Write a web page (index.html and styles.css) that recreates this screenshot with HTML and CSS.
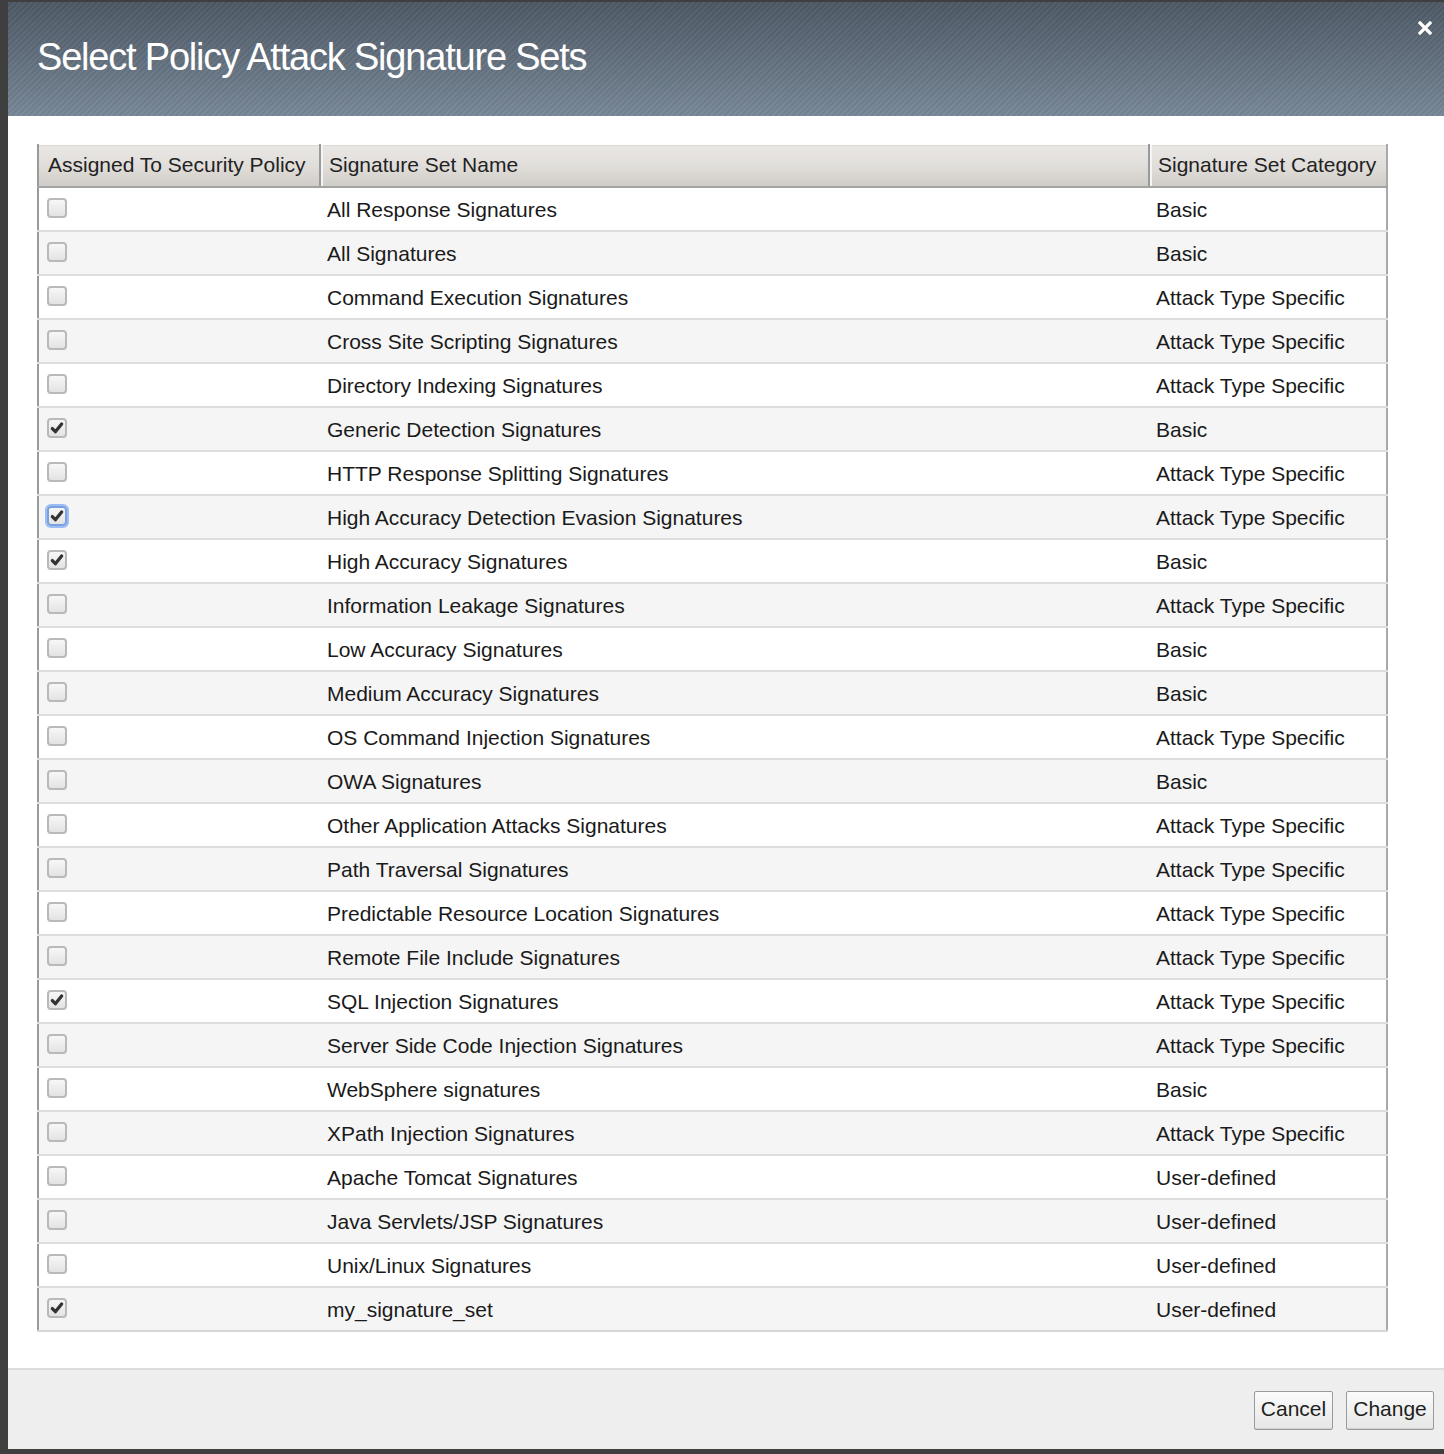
FILE: index.html
```html
<!DOCTYPE html>
<html>
<head>
<meta charset="utf-8">
<link rel="stylesheet" href="styles.css">
</head>
<body>
<div class="dialog">
  <div class="titlebar">
    <h1 class="title">Select Policy Attack Signature Sets</h1>
    <span class="close">
      <svg width="14" height="14" viewBox="0 0 14 14"><path d="M2 2 L12 12 M12 2 L2 12" stroke="#fff" stroke-width="3.2" stroke-linecap="square"/></svg>
    </span>
  </div>
  <div class="content">
    <table class="grid">
      <colgroup>
        <col class="col1">
        <col class="col2">
        <col class="col3">
      </colgroup>
      <thead>
        <tr>
          <th class="c1">Assigned To Security Policy</th>
          <th class="c2">Signature Set Name</th>
          <th class="c3">Signature Set Category</th>
        </tr>
      </thead>
      <tbody>
        <tr><td class="c1"><span class="cb"></span></td><td class="c2">All Response Signatures</td><td class="c3">Basic</td></tr>
        <tr><td class="c1"><span class="cb"></span></td><td class="c2">All Signatures</td><td class="c3">Basic</td></tr>
        <tr><td class="c1"><span class="cb"></span></td><td class="c2">Command Execution Signatures</td><td class="c3">Attack Type Specific</td></tr>
        <tr><td class="c1"><span class="cb"></span></td><td class="c2">Cross Site Scripting Signatures</td><td class="c3">Attack Type Specific</td></tr>
        <tr><td class="c1"><span class="cb"></span></td><td class="c2">Directory Indexing Signatures</td><td class="c3">Attack Type Specific</td></tr>
        <tr><td class="c1"><span class="cb on"><svg viewBox="0 0 12 12"><path d="M2 6.5 L4.6 9.2 L10 2.6" /></svg></span></td><td class="c2">Generic Detection Signatures</td><td class="c3">Basic</td></tr>
        <tr><td class="c1"><span class="cb"></span></td><td class="c2">HTTP Response Splitting Signatures</td><td class="c3">Attack Type Specific</td></tr>
        <tr><td class="c1"><span class="cb on focus"><svg viewBox="0 0 12 12"><path d="M2 6.5 L4.6 9.2 L10 2.6" /></svg></span></td><td class="c2">High Accuracy Detection Evasion Signatures</td><td class="c3">Attack Type Specific</td></tr>
        <tr><td class="c1"><span class="cb on"><svg viewBox="0 0 12 12"><path d="M2 6.5 L4.6 9.2 L10 2.6" /></svg></span></td><td class="c2">High Accuracy Signatures</td><td class="c3">Basic</td></tr>
        <tr><td class="c1"><span class="cb"></span></td><td class="c2">Information Leakage Signatures</td><td class="c3">Attack Type Specific</td></tr>
        <tr><td class="c1"><span class="cb"></span></td><td class="c2">Low Accuracy Signatures</td><td class="c3">Basic</td></tr>
        <tr><td class="c1"><span class="cb"></span></td><td class="c2">Medium Accuracy Signatures</td><td class="c3">Basic</td></tr>
        <tr><td class="c1"><span class="cb"></span></td><td class="c2">OS Command Injection Signatures</td><td class="c3">Attack Type Specific</td></tr>
        <tr><td class="c1"><span class="cb"></span></td><td class="c2">OWA Signatures</td><td class="c3">Basic</td></tr>
        <tr><td class="c1"><span class="cb"></span></td><td class="c2">Other Application Attacks Signatures</td><td class="c3">Attack Type Specific</td></tr>
        <tr><td class="c1"><span class="cb"></span></td><td class="c2">Path Traversal Signatures</td><td class="c3">Attack Type Specific</td></tr>
        <tr><td class="c1"><span class="cb"></span></td><td class="c2">Predictable Resource Location Signatures</td><td class="c3">Attack Type Specific</td></tr>
        <tr><td class="c1"><span class="cb"></span></td><td class="c2">Remote File Include Signatures</td><td class="c3">Attack Type Specific</td></tr>
        <tr><td class="c1"><span class="cb on"><svg viewBox="0 0 12 12"><path d="M2 6.5 L4.6 9.2 L10 2.6" /></svg></span></td><td class="c2">SQL Injection Signatures</td><td class="c3">Attack Type Specific</td></tr>
        <tr><td class="c1"><span class="cb"></span></td><td class="c2">Server Side Code Injection Signatures</td><td class="c3">Attack Type Specific</td></tr>
        <tr><td class="c1"><span class="cb"></span></td><td class="c2">WebSphere signatures</td><td class="c3">Basic</td></tr>
        <tr><td class="c1"><span class="cb"></span></td><td class="c2">XPath Injection Signatures</td><td class="c3">Attack Type Specific</td></tr>
        <tr><td class="c1"><span class="cb"></span></td><td class="c2">Apache Tomcat Signatures</td><td class="c3">User-defined</td></tr>
        <tr><td class="c1"><span class="cb"></span></td><td class="c2">Java Servlets/JSP Signatures</td><td class="c3">User-defined</td></tr>
        <tr><td class="c1"><span class="cb"></span></td><td class="c2">Unix/Linux Signatures</td><td class="c3">User-defined</td></tr>
        <tr><td class="c1"><span class="cb on"><svg viewBox="0 0 12 12"><path d="M2 6.5 L4.6 9.2 L10 2.6" /></svg></span></td><td class="c2">my_signature_set</td><td class="c3">User-defined</td></tr>
      </tbody>
    </table>
  </div>
  <div class="footer">
    <button class="btn btn-cancel">Cancel</button>
    <button class="btn btn-change">Change</button>
  </div>
</div>
</body>
</html>
```
FILE: styles.css
```css
html, body {
  margin: 0;
  padding: 0;
}
body {
  background: #3f3f3f;
  width: 1444px;
  height: 1454px;
  overflow: hidden;
  font-family: "Liberation Sans", Arial, sans-serif;
}
.dialog {
  margin: 2px 0 0 8px;
  width: 1436px;
  height: 1447px;
  background: #fff;
  display: flex;
  flex-direction: column;
}
.titlebar {
  height: 114px;
  flex: none;
  display: flex;
  align-items: center;
  justify-content: space-between;
  padding: 0 12px 0 29px;
  background:
    repeating-linear-gradient(135deg, rgba(255,255,255,0.035) 0 2px, rgba(0,0,0,0.035) 2px 4px),
    linear-gradient(to bottom, #4d5865 0%, #626f7d 50%, #788898 100%);
  box-sizing: border-box;
}
.title {
  margin: 0;
  margin-top: -3px;
  font-weight: normal;
  font-size: 38px;
  color: #fff;
  letter-spacing: -1.2px;
  white-space: nowrap;
}
.close {
  align-self: flex-start;
  margin-top: 19px;
  width: 14px;
  height: 14px;
  display: block;
}
.close svg { display: block; }
.content {
  flex: 1;
  padding: 28px 0 0 29px;
}
.grid {
  border-collapse: collapse;
  width: 1349px;
  table-layout: fixed;
  font-size: 21px;
  color: #1a1a1a;
  border-left: 2px solid #9a9a9a;
  border-right: 2px solid #a9a9a9;
}
.col1 { width: 282px; }
.col2 { width: 829px; }
.col3 { width: 238px; }
.grid th {
  height: 39px;
  padding: 0 8px 2px;
  text-align: left;
  font-weight: normal;
  background: linear-gradient(to bottom, #e9e7e4 0%, #dedbd7 60%, #cfcbc6 100%);
  border-bottom: 2px solid #a3a3a3;
  border-top: 1px solid #fff;
  color: #222;
  white-space: nowrap;
  overflow: hidden;
}
.grid th.c2, .grid th.c3 {
  border-left: 2px solid #9a9a9a;
  box-shadow: inset 2px 0 0 #f5f5f5;
  padding-left: 8px;
}
.grid th.c1 { padding-left: 9px; }
.grid td {
  height: 41px;
  padding: 1px 7px 0;
  border-bottom: 2px solid #dddddd;
  white-space: nowrap;
}
.grid td.c1 { padding-left: 8px; }
.grid tbody tr:nth-child(even) td { background: #f5f5f5; }
.grid tbody tr:last-child td { border-bottom: 2px solid #d6d6d6; }
.cb {
  display: block;
  width: 16px;
  height: 16px;
  border: 2px solid #b9b9b9;
  border-radius: 4px;
  background: linear-gradient(to bottom, #f7f7f7, #e3e3e3);
  position: relative;
  top: -2px;
}
.cb svg {
  position: absolute;
  left: 1px;
  top: 1px;
  width: 14px;
  height: 14px;
}
.cb svg path {
  fill: none;
  stroke: #333;
  stroke-width: 2.8;
  stroke-linecap: round;
  stroke-linejoin: round;
}
.cb.focus {
  box-shadow: 0 0 0 2px #9bbdf7;
  border-color: #7aa0e0;
}
.footer {
  height: 81px;
  box-sizing: border-box;
  flex: none;
  border-top: 2px solid #dcdcdc;
  background: #eeeeee;
  display: flex;
  justify-content: flex-end;
  align-items: flex-start;
  gap: 13px;
  padding: 21px 10px 0 0;
}
.btn {
  font-family: "Liberation Sans", Arial, sans-serif;
  font-size: 21px;
  color: #1e1e1e;
  height: 39px;
  padding: 0 4px 4px;
  border: 1px solid #9a9a9a;
  border-radius: 2px;
  background: linear-gradient(to bottom, #fbfbfb, #e6e6e6);
  box-shadow: inset 0 -1px 0 #d0d0d0;
}
.btn-cancel { width: 79px; }
.btn-change { width: 88px; }
```
